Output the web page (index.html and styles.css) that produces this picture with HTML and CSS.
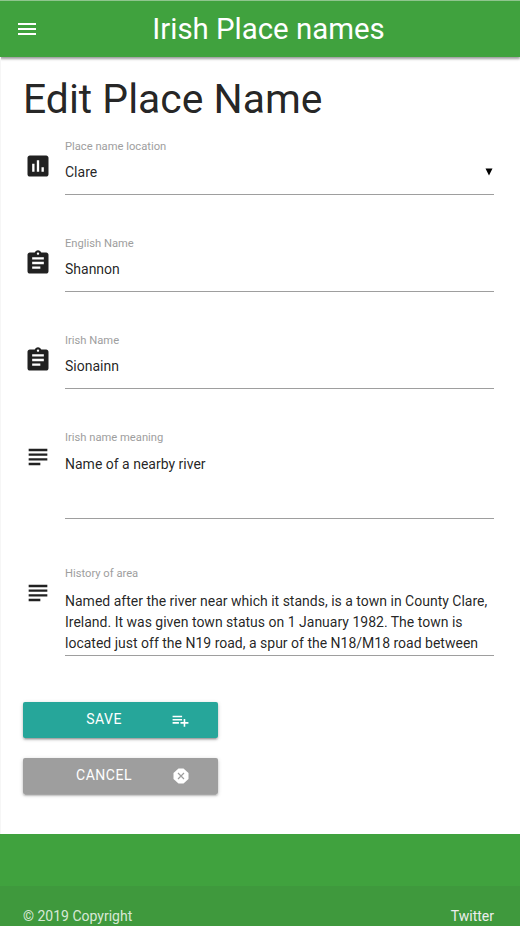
FILE: index.html
```html
<!DOCTYPE html>
<html lang="en">
<head>
<meta charset="utf-8">
<title>Irish Place names</title>
<link rel="stylesheet" href="styles.css">
</head>
<body>
<nav class="navbar">
  <svg class="menu" viewBox="0 0 24 24"><path d="M3 18h18v-2H3v2zm0-5h18v-2H3v2zm0-7v2h18V6H3z"/></svg>
  <span class="brand">Irish Place names</span>
</nav>
<main class="container">
  <h3>Edit Place Name</h3>
  <form>
    <div class="field">
      <svg class="icon" viewBox="0 0 24 24"><path d="M19 3H5c-1.1 0-2 .9-2 2v14c0 1.1.9 2 2 2h14c1.100 0 2-.9 2-2V5c0-1.100-.9-2-2-2zM9 17H7v-7h2v7zm4 0h-2V7h2v10zm4 0h-2v-4h2v4z"/></svg>
      <div class="control">
        <label>Place name location</label>
        <div class="value select"><span>Clare</span><svg class="caret" viewBox="0 0 8 8"><path d="M.5 .5h7L4 7.500z"/></svg></div>
      </div>
    </div>
    <div class="field">
      <svg class="icon" viewBox="0 0 24 24"><path d="M19 3h-4.180C14.400 1.840 13.300 1 12 1c-1.300 0-2.400.840-2.820 2H5c-1.100 0-2 .9-2 2v14c0 1.100.9 2 2 2h14c1.100 0 2-.9 2-2V5c0-1.100-.9-2-2-2zm-7 0c.55 0 1 .45 1 1s-.45 1-1 1-1-.45-1-1 .45-1 1-1zm2 14H7v-2h7v2zm3-4H7v-2h10v2zm0-4H7V7h10v2z"/></svg>
      <div class="control">
        <label>English Name</label>
        <div class="value">Shannon</div>
      </div>
    </div>
    <div class="field">
      <svg class="icon" viewBox="0 0 24 24"><path d="M19 3h-4.180C14.400 1.840 13.300 1 12 1c-1.300 0-2.400.840-2.820 2H5c-1.100 0-2 .9-2 2v14c0 1.100.9 2 2 2h14c1.100 0 2-.9 2-2V5c0-1.100-.9-2-2-2zm-7 0c.55 0 1 .45 1 1s-.45 1-1 1-1-.45-1-1 .45-1 1-1zm2 14H7v-2h7v2zm3-4H7v-2h10v2zm0-4H7V7h10v2z"/></svg>
      <div class="control">
        <label>Irish Name</label>
        <div class="value">Sionainn</div>
      </div>
    </div>
    <div class="field">
      <svg class="icon" viewBox="0 0 24 24"><path d="M14 17H4v2h10v-2zm6-8H4v2h16V9zM4 15h16v-2H4v2zM4 5v2h16V5H4z"/></svg>
      <div class="control">
        <label>Irish name meaning</label>
        <div class="value area">Name of a nearby river</div>
      </div>
    </div>
    <div class="field history">
      <svg class="icon" viewBox="0 0 24 24"><path d="M14 17H4v2h10v-2zm6-8H4v2h16V9zM4 15h16v-2H4v2zM4 5v2h16V5H4z"/></svg>
      <div class="control">
        <label>History of area</label>
        <div class="value area">Named after the river near which it stands, is a town in County Clare,<br>Ireland. It was given town status on 1 January 1982. The town is<br>located just off the N19 road, a spur of the N18/M18 road between</div>
      </div>
    </div>
    <div class="actions">
      <button type="button" class="btn save"><span class="text">Save</span><svg viewBox="0 0 24 24"><path d="M14 10H2v2h12v-2zm0-4H2v2h12V6zm4 8v-4h-2v4h-4v2h4v4h2v-4h4v-2h-4zM2 16h8v-2H2v2z"/></svg></button>
      <button type="button" class="btn cancel"><span class="text">Cancel</span><svg viewBox="0 0 16 16"><path class="disc" d="M5.500 .5h5L15.500 5v6L10.500 15.500h-5L.5 11V5z"/><path class="cross" d="M5 5l6 6M11 5l-6 6"/></svg></button>
    </div>
  </form>
</main>
<footer class="footer">
  <div class="copyright"><span>© 2019 Copyright</span><a>Twitter</a></div>
</footer>
</body>
</html>
```
FILE: styles.css
```css
* { box-sizing: border-box; }
html { font: 14px/1.5 Roboto, sans-serif; }
body {
  margin: 0;
  height: 926px;
  overflow: hidden;
  display: flex;
  flex-direction: column;
  color: rgba(0, 0, 0, .87);
  background: #fff;
}
svg { display: block; fill: currentColor; flex: none; }
.navbar {
  flex: none;
  height: 57px;
  padding-left: 15px;
  border-top: 1px solid #8fc58e;
  display: flex;
  align-items: center;
  color: #fff;
  background: #40a23e;
  box-shadow: 0 2px 2px rgba(0, 0, 0, .28), 0 1px 4px rgba(0, 0, 0, .2);
}
.menu { width: 24px; height: 24px; }
.brand { flex: 1; padding-right: 22px; text-align: center; font-size: 29.4px; line-height: 56px; }
.container {
  flex: none;
  height: 777px;
  padding: 20px 26px 0 22px;
  border-left: 1px solid #f6f6f6;
}
h3 { margin: 0 0 14px; font-size: 40.88px; line-height: 45px; font-weight: 400; }
.field { display: flex; height: 97px; }
.icon { width: 28px; height: 28px; margin: 16px 13.500px 0 .5px; }
.control { flex: 1; min-width: 0; }
label { display: block; height: 17px; font-size: 11.2px; line-height: 22px; color: #9e9e9e; }
.value { height: 42px; line-height: 38px; border-bottom: 1px solid #9e9e9e; white-space: nowrap; }
.select { display: flex; justify-content: space-between; }
.caret { width: 8px; height: 8px; margin: 15px 1px 0 0; color: #000; }
.area { height: 75px; padding-top: 10px; line-height: 21px; }
.history { margin-top: 39px; height: 130px; }
.history .area { height: 76px; padding-top: 11px; }
.actions { display: flex; flex-direction: column; gap: 20px; padding-top: 9px; }
.btn {
  width: 195px;
  height: 36px;
  padding: 0 28px 0 14px;
  border: 0;
  border-radius: 2px;
  display: flex;
  align-items: center;
  font: 14px/36px Roboto, sans-serif;
  letter-spacing: .5px;
  text-transform: uppercase;
  color: #fff;
  box-shadow: 0 2px 2px rgba(0, 0, 0, .16), 0 3px 1px -2px rgba(0, 0, 0, .14), 0 1px 4px rgba(0, 0, 0, .18);
}
.text { flex: 1; position: relative; top: -1px; text-align: center; }
.save { background: #26a69a; }
.cancel { background: #9e9e9e; }
.save svg { width: 19px; height: 19px; }
.cancel svg { width: 16px; height: 16px; margin: 0 1px 0 2px; }
.cross { fill: none; stroke: #9e9e9e; stroke-width: 1.2; }
.footer { flex: none; height: 105px; padding-top: 52px; background: #40a23e; }
.copyright {
  height: 53px;
  padding: 9px 26px 0 23px;
  display: flex;
  justify-content: space-between;
  line-height: 42px;
  color: rgba(255, 255, 255, .8);
  background: rgba(51, 51, 51, .08);
}
.copyright a { color: #eee; }
```
